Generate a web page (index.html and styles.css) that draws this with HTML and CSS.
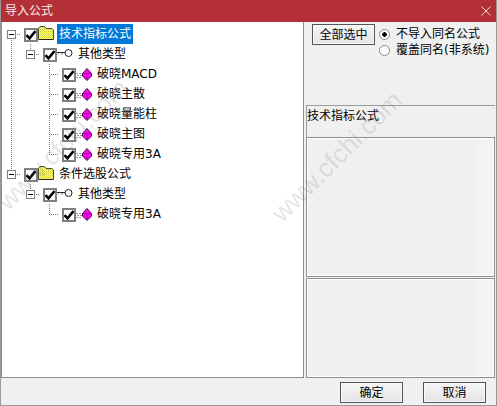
FILE: index.html
```html
<!DOCTYPE html>
<html lang="zh">
<head>
<meta charset="utf-8">
<title>导入公式</title>
<link rel="stylesheet" href="styles.css">
</head>
<body>
<svg class="defs" width="0" height="0" aria-hidden="true">
  <pattern id="dither" width="2" height="2" patternUnits="userSpaceOnUse">
    <rect width="2" height="2" fill="#ffff4d"/>
    <rect width="1" height="1" fill="#c8c850"/>
    <rect x="1" y="1" width="1" height="1" fill="#e8e860"/>
  </pattern>
  <symbol id="folder" viewBox="0 0 16 16">
    <path d="M0.500 14.500V3.500L2 1.500h4.500L8 3.500h6l1.500 1.500v9.500z" fill="url(#dither)" stroke="#4a4a30"/>
    <path d="M1 14.500h14" stroke="#222"/>
  </symbol>
  <symbol id="key" viewBox="0 0 16 16">
    <path d="M0 7.500h8" stroke="#222" fill="none"/>
    <path d="M1 9h1M4 9h2" stroke="#555" stroke-width="0.800" fill="none"/>
    <circle cx="11.500" cy="8" r="3.500" fill="#fff" stroke="#222"/>
  </symbol>
  <symbol id="gem" viewBox="0 0 16 16">
    <path d="M0 8.500h6M1 10.500h5M0 12.500h6" stroke="#9a9a9a" stroke-dasharray="2 1"/>
    <path d="M11 3.500L15.500 8.500V11L11 15.500L6.500 11V8.500z" fill="#ff00f0" stroke="#3a1040"/>
    <path d="M7.500 8.500h7M11 8.500v6" stroke="#a000a8"/>
  </symbol>
  <symbol id="check" viewBox="0 0 10 10">
    <path d="M0.500 5L3.500 8.300L9.500 1" fill="none" stroke="#000" stroke-width="2.600"/>
  </symbol>
</svg>
<div class="window">
  <header class="titlebar">
    <span class="title">导入公式</span>
    <svg class="close" width="10" height="10" viewBox="0 0 10 10"><path d="M0.500 0.500L9.500 9.500M9.500 0.500L0.500 9.500" stroke="#f4d9da" fill="none"/></svg>
  </header>
  <main class="main">
    <section class="tree">
      <div class="row">
        <span class="cell g-down"><i class="exp"></i></span>
        <span class="cb"><svg width="10" height="10"><use href="#check"/></svg></span>
        <svg class="ico" width="16" height="16"><use href="#folder"/></svg>
        <span class="label selected">技术指标公式</span>
      </div>
      <div class="row">
        <span class="cell g-v"></span>
        <span class="cell g-up"><i class="exp"></i></span>
        <span class="cb"><svg width="10" height="10"><use href="#check"/></svg></span>
        <svg class="ico" width="16" height="16"><use href="#key"/></svg>
        <span class="label">其他类型</span>
      </div>
      <div class="row">
        <span class="cell g-v"></span><span class="cell blank"></span><span class="cell g-t"></span>
        <span class="cb"><svg width="10" height="10"><use href="#check"/></svg></span>
        <svg class="ico" width="16" height="16"><use href="#gem"/></svg>
        <span class="label">破晓MACD</span>
      </div>
      <div class="row">
        <span class="cell g-v"></span><span class="cell blank"></span><span class="cell g-t"></span>
        <span class="cb"><svg width="10" height="10"><use href="#check"/></svg></span>
        <svg class="ico" width="16" height="16"><use href="#gem"/></svg>
        <span class="label">破晓主散</span>
      </div>
      <div class="row">
        <span class="cell g-v"></span><span class="cell blank"></span><span class="cell g-t"></span>
        <span class="cb"><svg width="10" height="10"><use href="#check"/></svg></span>
        <svg class="ico" width="16" height="16"><use href="#gem"/></svg>
        <span class="label">破晓量能柱</span>
      </div>
      <div class="row">
        <span class="cell g-v"></span><span class="cell blank"></span><span class="cell g-t"></span>
        <span class="cb"><svg width="10" height="10"><use href="#check"/></svg></span>
        <svg class="ico" width="16" height="16"><use href="#gem"/></svg>
        <span class="label">破晓主图</span>
      </div>
      <div class="row">
        <span class="cell g-v"></span><span class="cell blank"></span><span class="cell g-l"></span>
        <span class="cb"><svg width="10" height="10"><use href="#check"/></svg></span>
        <svg class="ico" width="16" height="16"><use href="#gem"/></svg>
        <span class="label">破晓专用3A</span>
      </div>
      <div class="row">
        <span class="cell g-up"><i class="exp"></i></span>
        <span class="cb"><svg width="10" height="10"><use href="#check"/></svg></span>
        <svg class="ico" width="16" height="16"><use href="#folder"/></svg>
        <span class="label">条件选股公式</span>
      </div>
      <div class="row">
        <span class="cell blank"></span>
        <span class="cell g-up"><i class="exp"></i></span>
        <span class="cb"><svg width="10" height="10"><use href="#check"/></svg></span>
        <svg class="ico" width="16" height="16"><use href="#key"/></svg>
        <span class="label">其他类型</span>
      </div>
      <div class="row">
        <span class="cell blank"></span><span class="cell blank"></span><span class="cell g-l"></span>
        <span class="cb"><svg width="10" height="10"><use href="#check"/></svg></span>
        <svg class="ico" width="16" height="16"><use href="#gem"/></svg>
        <span class="label">破晓专用3A</span>
      </div>
    </section>
    <aside class="side">
      <div class="options">
        <button class="btn select-all" type="button">全部选中</button>
        <div class="radios">
          <label class="radio"><span class="dot on"></span>不导入同名公式</label>
          <label class="radio"><span class="dot"></span>覆盖同名(非系统)</label>
        </div>
      </div>
      <div class="caption">技术指标公式</div>
      <div class="panel tall"></div>
      <div class="panel short"></div>
    </aside>
  </main>
  <footer class="footer">
    <button class="btn action" type="button">确定</button>
    <button class="btn action" type="button">取消</button>
  </footer>
  <div class="mark mark-a">www.cfchi.com</div>
  <div class="mark mark-b">www.cfchi.com</div>
</div>
</body>
</html>
```

FILE: styles.css
```css
* { box-sizing: border-box; }
html, body { margin: 0; padding: 0; }
body {
  width: 497px;
  height: 406px;
  overflow: hidden;
  font: 12px/16px "DejaVu Sans", "Noto Sans CJK SC", sans-serif;
  color: #000;
  background: #f0f0f0;
}
.defs { position: absolute; }
.window {
  position: relative;
  width: 497px;
  height: 406px;
  display: flex;
  flex-direction: column;
  overflow: hidden;
  border-left: 1px solid #9a9a9a;
  border-right: 1px solid #9a9a9a;
  border-bottom: 1px solid #9a9a9a;
}
.titlebar {
  flex: none;
  height: 22px;
  margin: 0 -1px;
  padding: 0 6px 0 5px;
  display: flex;
  align-items: center;
  justify-content: space-between;
  background: #b33037;
  color: #fbeeee;
}
.main {
  flex: none;
  height: 356px;
  display: flex;
}
.tree {
  flex: none;
  width: 303px;
  height: 356px;
  padding: 2px 0 0 0;
  background: #fff;
  border-left: 1px solid #8c8c8c;
  border-right: 1px solid #8c8c8c;
  border-bottom: 1px solid #8c8c8c;
}
.row {
  height: 20px;
  display: flex;
  align-items: center;
}
.cell {
  flex: none;
  width: 19px;
  height: 20px;
  display: flex;
  align-items: center;
  background-repeat: no-repeat;
}
.g-v, .g-t, .g-l, .g-up, .g-down {
  --dv: repeating-linear-gradient(to bottom, #777 0 1px, transparent 1px 2px);
  --dh: repeating-linear-gradient(to right, #777 0 1px, transparent 1px 2px);
}
.g-v { background-image: var(--dv); background-size: 1px 20px; background-position: 9px 0; }
.g-t {
  background-image: var(--dv), var(--dh);
  background-size: 1px 20px, 13px 1px;
  background-position: 9px 0, 9px 10px;
}
.g-l, .g-up {
  background-image: var(--dv), var(--dh);
  background-size: 1px 10px, 13px 1px;
  background-position: 9px 0, 9px 10px;
}
.g-down {
  background-image: var(--dv), var(--dh);
  background-size: 1px 10px, 13px 1px;
  background-position: 9px 10px, 9px 10px;
}
.exp {
  width: 9px;
  height: 9px;
  margin-left: 5px;
  border: 1px solid #808080;
  background: linear-gradient(#000, #000) center / 5px 1px no-repeat, #fff;
}
.cb {
  flex: none;
  width: 14px;
  height: 14px;
  margin-left: 3px;
  margin-top: 2px;
  display: flex;
  align-items: center;
  justify-content: center;
  background: #fff;
  border: 2px solid #808080;
}
.ico { flex: none; margin-top: -2px; }
.row .label {
  margin-left: 3px;
  padding: 0 2px;
  height: 20px;
  line-height: 20px;
  white-space: nowrap;
}
.label.selected { background: #0078d7; color: #fff; }
.side {
  flex: 1;
  padding: 2px 1px 0 2px;
  display: flex;
  flex-direction: column;
}
.options {
  height: 81px;
  padding-left: 6px;
  display: flex;
  align-items: flex-start;
  gap: 4px;
}
.btn {
  padding: 0;
  font: inherit;
  color: #000;
  border: 1px solid #555;
  background: linear-gradient(#f6f6f6, #e4e4e4);
  box-shadow: inset 0 0 0 1px #f8f8f8;
}
.select-all { width: 63px; height: 21px; }
.radios { display: flex; flex-direction: column; padding-top: 2px; }
.radio {
  height: 16px;
  display: flex;
  align-items: center;
  gap: 6px;
  white-space: nowrap;
}
.dot {
  width: 11px;
  height: 11px;
  border-radius: 50%;
  background: #fff;
  border: 1px solid #8a8a8a;
}
.dot.on { background: radial-gradient(circle, #000 0 2px, #fff 2.5px); }
.caption {
  height: 32px;
  padding-top: 2px;
  padding-left: 0;
  border-top: 1px solid #9a9a9a;
  border-left: 1px solid #9a9a9a;
  white-space: nowrap;
}
.panel {
  flex: none;
  border: 1px solid #8f8f8f;
  box-shadow: inset 0 0 0 1px #fff;
  background: linear-gradient(to right, #f0f0f0 0 170px, #f4f3f2 170px);
}
.tall { height: 140px; }
.short { height: 100px; margin-top: 1px; }
.footer {
  flex: 1;
  display: flex;
  justify-content: flex-end;
  align-items: flex-start;
  gap: 20px;
  padding: 4px 10px 0 0;
}
.action { width: 63px; height: 21px; }
.mark {
  position: absolute;
  width: 170px;
  text-align: center;
  color: rgba(120, 120, 120, 0.2);
  font: 26px/30px "Liberation Sans", sans-serif;
  transform: rotate(-45deg);
  pointer-events: none;
  white-space: nowrap;
}
.mark-a { left: -24px; top: 130px; }
.mark-b { left: 250px; top: 142px; }
```
